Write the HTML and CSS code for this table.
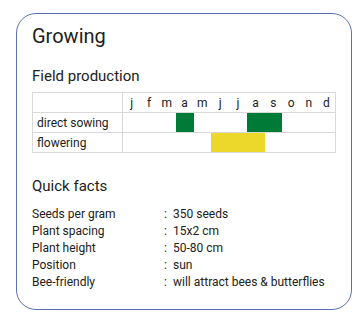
FILE: index.html
```html
<!DOCTYPE html>
<html lang="en">
<head>
<meta charset="utf-8">
<title>Growing</title>
<link rel="stylesheet" href="styles.css">
</head>
<body>
<section class="card">
  <h2 class="title">Growing</h2>
  <h3 class="subtitle">Field production</h3>
  <table class="calendar">
    <colgroup>
      <col class="label-col">
      <col span="12">
    </colgroup>
    <tr class="head">
      <td class="label"></td>
      <td>j</td><td>f</td><td>m</td><td>a</td><td>m</td><td>j</td>
      <td>j</td><td>a</td><td>s</td><td>o</td><td>n</td><td>d</td>
    </tr>
    <tr>
      <td class="label">direct sowing</td>
      <td></td><td></td><td></td><td class="sow"></td><td></td><td></td>
      <td></td><td class="sow"></td><td class="sow"></td><td></td><td></td><td></td>
    </tr>
    <tr>
      <td class="label">flowering</td>
      <td></td><td></td><td></td><td></td><td></td><td class="flower"></td>
      <td class="flower"></td><td class="flower"></td><td></td><td></td><td></td><td></td>
    </tr>
  </table>
  <h3 class="subtitle facts-title">Quick facts</h3>
  <dl class="facts">
    <dt>Seeds per gram</dt><dd>350 seeds</dd>
    <dt>Plant spacing</dt><dd>15x2 cm</dd>
    <dt>Plant height</dt><dd>50-80 cm</dd>
    <dt>Position</dt><dd>sun</dd>
    <dt>Bee-friendly</dt><dd>will attract bees &amp; butterflies</dd>
  </dl>
</section>
</body>
</html>
```
FILE: styles.css
```css
* { box-sizing: border-box; }
html, body { margin: 0; padding: 0; background: #fff; }
body {
  font-family: Roboto, "Liberation Sans", Arial, sans-serif;
  color: #212121;
  padding: 13px 7px 0 16px;
}
.card {
  width: 336px;
  border: 1px solid #5b70b3;
  border-radius: 20px;
  padding: 10px 15px 18px 15px;
}
.title {
  margin: 0;
  font-size: 20px;
  line-height: 24px;
  font-weight: 400;
}
.subtitle {
  margin: 19px 0 0 0;
  font-size: 15px;
  line-height: 18px;
  font-weight: 400;
}
.calendar {
  margin-top: 7px;
  width: 100%;
  border-collapse: collapse;
  table-layout: fixed;
  font-size: 12px;
}
.label-col { width: 90px; }
.calendar td {
  height: 20px;
  padding: 0;
  border-top: 1px solid #d9d9d9;
  border-bottom: 1px solid #d9d9d9;
  text-align: center;
  line-height: 18px;
}
.calendar td:last-child { border-right: 1px solid #d9d9d9; }
.calendar td.label {
  border: 1px solid #d9d9d9;
  text-align: left;
  padding-left: 4px;
}
.calendar .sow { background: #007a37; }
.calendar .flower { background: #ecd82b; }
.facts-title { margin-top: 24px; }
.facts {
  margin: 11px 0 0 0;
  display: grid;
  grid-template-columns: 132px 1fr;
  font-size: 12px;
  line-height: 17px;
}
.facts dt { margin: 0; }
.facts dd { margin: 0; }
.facts dd::before {
  content: ":";
  display: inline-block;
  width: 9px;
}
```
